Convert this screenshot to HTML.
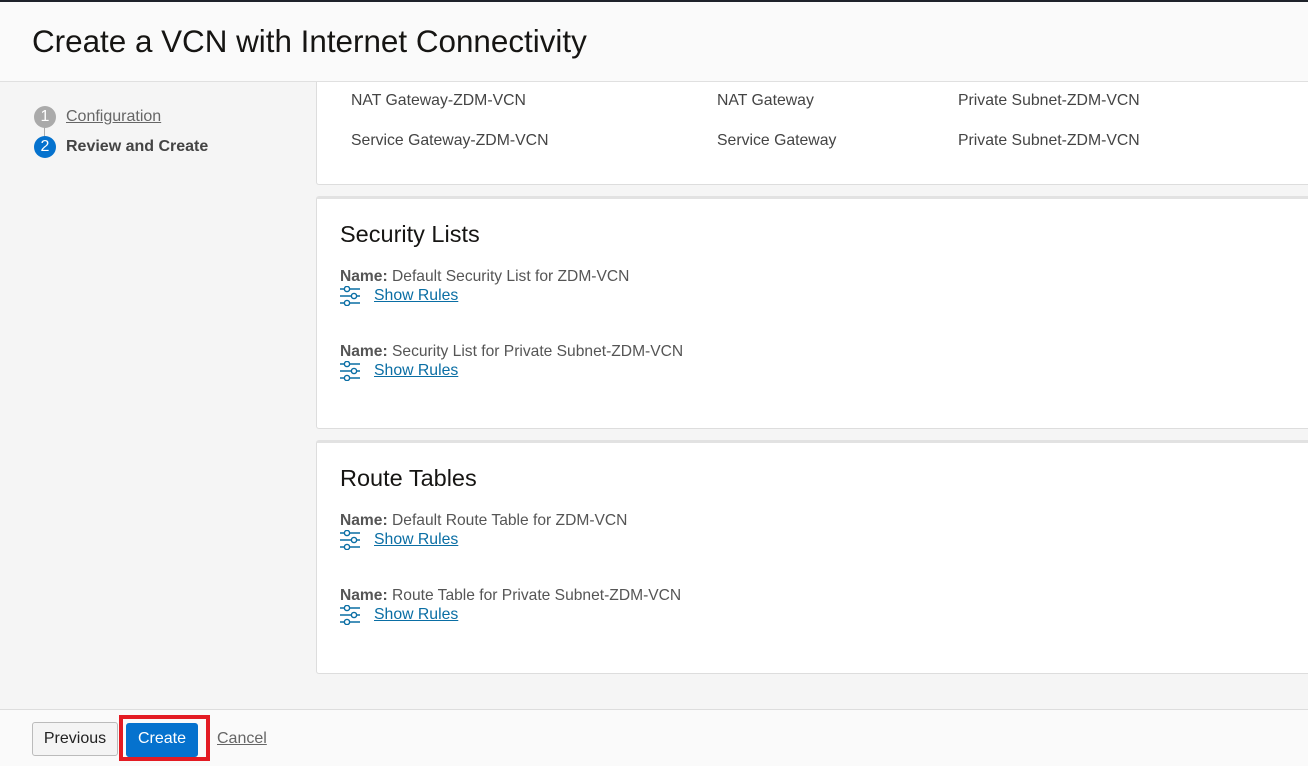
<!DOCTYPE html>
<html><head><style>
*{margin:0;padding:0;box-sizing:border-box}
body{width:1308px;height:766px;overflow:hidden;background:#f5f5f5;font-family:"Liberation Sans",sans-serif;position:relative;color:#333}
.top{position:absolute;left:0;top:0;width:1308px;height:2px;background:#1e222a;z-index:6}
.hdr{position:absolute;left:0;top:2px;width:1308px;height:80px;background:#fafafa;border-bottom:1px solid #e0e0e0;z-index:5}
.hdr h1{position:absolute;left:32px;top:22px;font-size:31.4px;font-weight:normal;color:#161513}
.step{position:absolute;left:34px;font-size:16px;display:flex;align-items:center}
.num{width:22px;height:22px;border-radius:50%;color:#fff;font-size:16px;text-align:center;line-height:22px;margin-right:10px}
.vline{position:absolute;left:44px;top:126px;width:1px;height:12px;background:#aaa}
.card{position:absolute;left:316px;width:1000px;background:#fff;border:1px solid #ddd;border-radius:3px}
.t{position:absolute;font-size:15.8px;color:#444}
.card h2{position:absolute;left:23px;font-size:23.5px;font-weight:normal;color:#161513}
.nm{position:absolute;left:23px;font-size:15.6px;color:#555}
.nm b{color:#555}
.sr{position:absolute;left:23px;font-size:15.8px;display:flex;align-items:center}
.sr a{color:#0a6ea4;text-decoration:underline;margin-left:14px}
.ftr{position:absolute;left:0;top:709px;width:1308px;height:57px;background:#fafafa;border-top:1px solid #ddd}
.btn{position:absolute;top:12px;height:34px;font-size:16px;line-height:32px;text-align:center;border-radius:3px}
</style></head><body>
<div class="top"></div>
<div class="hdr"><h1>Create a VCN with Internet Connectivity</h1></div>
<div class="step" style="top:106px"><span class="num" style="background:#aaa">1</span><span style="color:#666;text-decoration:underline">Configuration</span></div>
<div class="vline"></div>
<div class="step" style="top:136px"><span class="num" style="background:#0572ce">2</span><b style="color:#444">Review and Create</b></div>

<div class="card" style="top:70px;height:115px;border-top:none">
<div class="t" style="left:34px;top:22px">NAT Gateway-ZDM-VCN</div>
<div class="t" style="left:400px;top:22px">NAT Gateway</div>
<div class="t" style="left:641px;top:22px">Private Subnet-ZDM-VCN</div>
<div class="t" style="left:34px;top:62px">Service Gateway-ZDM-VCN</div>
<div class="t" style="left:400px;top:62px">Service Gateway</div>
<div class="t" style="left:641px;top:62px">Private Subnet-ZDM-VCN</div>
</div>

<div class="card" style="top:196px;height:233px;border-top:3px solid #e2e2e2">
<h2 style="top:22px">Security Lists</h2>
<div class="nm" style="top:69px"><b>Name:</b> Default Security List for ZDM-VCN</div>
<div class="sr" style="top:87px"><svg width="20" height="20" viewBox="0 0 20 20" fill="none" stroke="#0a6ea4" stroke-width="1.4"><path d="M0 3h4M10 3h10M0 10h11M17 10h3M0 17h4M10 17h10"/><circle cx="7" cy="3" r="2.6"/><circle cx="14" cy="10" r="2.6"/><circle cx="7" cy="17" r="2.6"/></svg><a>Show Rules</a></div>
<div class="nm" style="top:144px"><b>Name:</b> Security List for Private Subnet-ZDM-VCN</div>
<div class="sr" style="top:162px"><svg width="20" height="20" viewBox="0 0 20 20" fill="none" stroke="#0a6ea4" stroke-width="1.4"><path d="M0 3h4M10 3h10M0 10h11M17 10h3M0 17h4M10 17h10"/><circle cx="7" cy="3" r="2.6"/><circle cx="14" cy="10" r="2.6"/><circle cx="7" cy="17" r="2.6"/></svg><a>Show Rules</a></div>
</div>

<div class="card" style="top:440px;height:234px;border-top:3px solid #e2e2e2">
<h2 style="top:22px">Route Tables</h2>
<div class="nm" style="top:69px"><b>Name:</b> Default Route Table for ZDM-VCN</div>
<div class="sr" style="top:87px"><svg width="20" height="20" viewBox="0 0 20 20" fill="none" stroke="#0a6ea4" stroke-width="1.4"><path d="M0 3h4M10 3h10M0 10h11M17 10h3M0 17h4M10 17h10"/><circle cx="7" cy="3" r="2.6"/><circle cx="14" cy="10" r="2.6"/><circle cx="7" cy="17" r="2.6"/></svg><a>Show Rules</a></div>
<div class="nm" style="top:144px"><b>Name:</b> Route Table for Private Subnet-ZDM-VCN</div>
<div class="sr" style="top:162px"><svg width="20" height="20" viewBox="0 0 20 20" fill="none" stroke="#0a6ea4" stroke-width="1.4"><path d="M0 3h4M10 3h10M0 10h11M17 10h3M0 17h4M10 17h10"/><circle cx="7" cy="3" r="2.6"/><circle cx="14" cy="10" r="2.6"/><circle cx="7" cy="17" r="2.6"/></svg><a>Show Rules</a></div>
</div>

<div class="ftr">
<div class="btn" style="left:32px;width:86px;background:#f4f4f4;border:1px solid #bbb;color:#222">Previous</div>
<div style="position:absolute;left:119px;top:5px;width:91px;height:46px;border:4px solid #e31b23"></div>
<div class="btn" style="left:126px;width:72px;background:#0572ce;color:#fff;top:13px">Create</div>
<div style="position:absolute;left:217px;top:20px;font-size:16px;color:#666;text-decoration:underline">Cancel</div>
</div>
</body></html>
